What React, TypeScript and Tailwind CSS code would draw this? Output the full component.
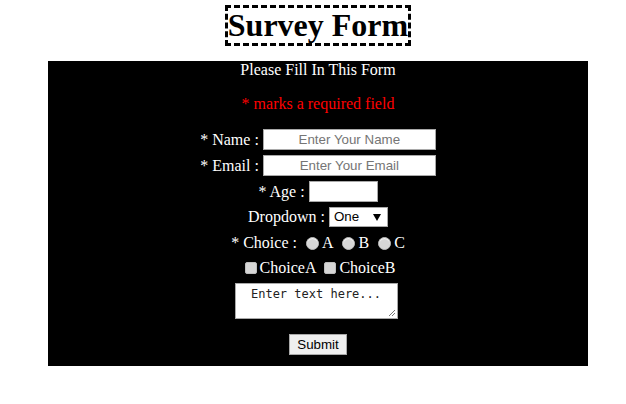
import React from 'react';

const serif = { fontFamily: '"Liberation Serif", "Times New Roman", serif' };

const Radio = ({ label }: { label: string }) => (
  <span className="flex items-center">
    <span className="ml-[9px] mr-[3px] w-[13px] h-[13px] rounded-full bg-[#d6d6d6] border border-[#bdbdbd] shadow-[inset_0_1px_1px_rgba(255,255,255,0.8)]" />
    <span>{label}</span>
  </span>
);

const Check = ({ label, first }: { label: string; first?: boolean }) => (
  <span className="flex items-center">
    <span
      className={`${first ? 'ml-[4px]' : 'ml-[8px]'} mr-[3px] w-[12px] h-[12px] rounded-[2px] bg-[#d6d6d6] border border-[#bdbdbd]`}
    />
    <span>{label}</span>
  </span>
);

export default function App() {
  return (
    <div className="w-[626px] h-[404px] bg-white font-['Liberation_Serif',serif]" style={serif}>
      <div className="ml-[48px] w-[540px]">
        <div className="pt-[5px] flex justify-center">
          <h1 className="border-[3px] border-dashed border-black text-[32px] font-bold leading-[35px] text-black">
            Survey Form
          </h1>
        </div>

        <form className="mt-[15px] bg-black text-white text-[16px] flex flex-col items-center pb-[11px]">
          <p className="h-[18px] leading-[18px]">Please Fill In This Form</p>
          <p className="mt-[16px] h-[18px] leading-[18px] text-[#ff0000]">* marks a required field</p>

          <div className="mt-[16px] h-[21px] flex items-center gap-[4px]">
            <span>* Name :</span>
            <div className="w-[173px] h-[21px] bg-white border border-[#a9a9a9] flex items-center justify-center font-['Liberation_Sans',Arial,sans-serif] text-[13.33px] text-[#757575]">
              Enter Your Name
            </div>
          </div>

          <div className="mt-[5px] h-[21px] flex items-center gap-[4px]">
            <span>* Email :</span>
            <div className="w-[173px] h-[21px] bg-white border border-[#a9a9a9] flex items-center justify-center font-['Liberation_Sans',Arial,sans-serif] text-[13.33px] text-[#757575]">
              Enter Your Email
            </div>
          </div>

          <div className="mt-[5px] h-[21px] flex items-center gap-[4px]">
            <span>* Age :</span>
            <div className="w-[69px] h-[21px] bg-white border border-[#a9a9a9]" />
          </div>

          <div className="mt-[5px] h-[20px] flex items-center gap-[4px]">
            <span>Dropdown :</span>
            <div className="w-[59px] h-[20px] bg-white border border-[#a9a9a9] flex items-center justify-between pl-[4px] pr-[6px] font-['Liberation_Sans',Arial,sans-serif] text-[13.33px] text-black">
              <span>One</span>
              <svg width="8" height="7" viewBox="0 0 8 7">
                <path d="M0 0 H8 L4 7 Z" fill="#000" />
              </svg>
            </div>
          </div>

          <div className="mt-[5px] h-[22px] flex items-center">
            <span>* Choice :</span>
            <Radio label="A" />
            <Radio label="B" />
            <Radio label="C" />
          </div>

          <div className="mt-[3px] h-[22px] flex items-center">
            <Check label="ChoiceA" first />
            <Check label="ChoiceB" />
          </div>

          <div className="mt-[4px] mr-[4px] relative w-[163px] h-[36px] bg-white border border-[#a9a9a9] pt-[3px] text-center font-['DejaVu_Sans_Mono',monospace] text-[12px] leading-[15px] text-[#222]">
            Enter text here...
            <svg className="absolute right-[1px] bottom-[1px]" width="9" height="9" viewBox="0 0 9 9">
              <path d="M8 2 L2 8 M8 5 L5 8" stroke="#777" strokeWidth="1" />
            </svg>
          </div>

          <div className="mt-[15px] w-[58px] h-[21px] bg-[#efefef] border border-[#a9a9a9] flex items-center justify-center font-['Liberation_Sans',Arial,sans-serif] text-[13.33px] text-black">
            Submit
          </div>
        </form>
      </div>
    </div>
  );
}
